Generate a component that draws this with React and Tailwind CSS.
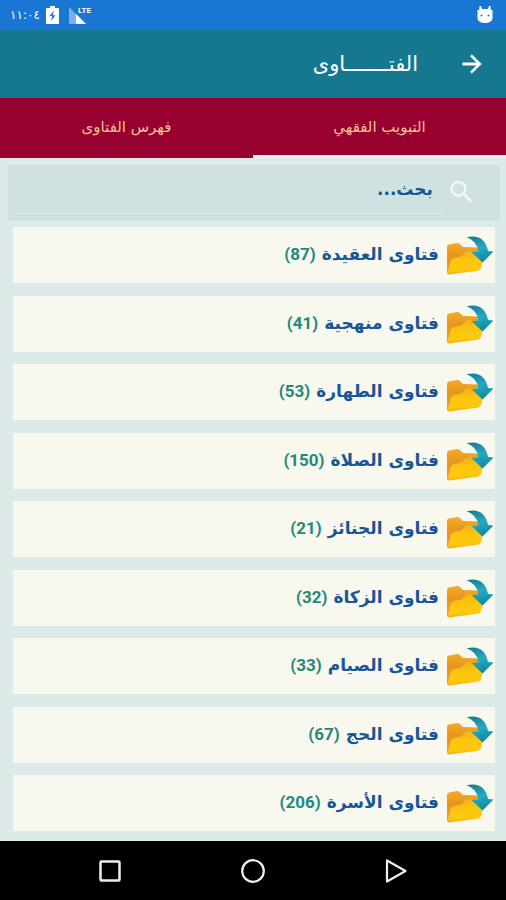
const categories = [
  { name: 'فتاوى العقيدة', count: 87 },
  { name: 'فتاوى منهجية', count: 41 },
  { name: 'فتاوى الطهارة', count: 53 },
  { name: 'فتاوى الصلاة', count: 150 },
  { name: 'فتاوى الجنائز', count: 21 },
  { name: 'فتاوى الزكاة', count: 32 },
  { name: 'فتاوى الصيام', count: 33 },
  { name: 'فتاوى الحج', count: 67 },
  { name: 'فتاوى الأسرة', count: 206 },
];

function FolderIcon() {
  return (
    <svg viewBox="0 0 48 44" className="h-11 w-12 shrink-0" aria-hidden="true">
      <defs>
        <linearGradient id="folder-back" x1="0" y1="0" x2="0" y2="1">
          <stop offset="0" stopColor="#f3ab2a" />
          <stop offset="0.4" stopColor="#e8961a" />
          <stop offset="1" stopColor="#e9a01f" />
        </linearGradient>
        <linearGradient id="folder-front" x1="0.5" y1="0" x2="0.6" y2="1">
          <stop offset="0" stopColor="#f6ae10" />
          <stop offset="0.4" stopColor="#fcc60c" />
          <stop offset="0.8" stopColor="#fdc90c" />
          <stop offset="1" stopColor="#ef9d13" />
        </linearGradient>
        <linearGradient id="folder-arrow" x1="0" y1="0" x2="0.3" y2="1">
          <stop offset="0" stopColor="#12788e" />
          <stop offset="0.55" stopColor="#22abc6" />
          <stop offset="1" stopColor="#128ba3" />
        </linearGradient>
      </defs>
      <path d="M1 14Q1 12 3 11.600L11 10Q13 9.700 14.500 11.500L17 14L34 14.500Q36 14.500 36 17V30L2 41Q1 41 1 39Z" fill="url(#folder-back)" />
      <path d="M5 28.500Q6 26 8 25.500L14 24.500Q17 23.500 19 20.500L21 18.500Q22 17.500 24 17.600L38 20Q39 20.500 38.500 22L35 35Q34.500 37 32.500 37.400L3 41.500Q1.500 41.500 2 39.500Z" fill="url(#folder-front)" />
      <path d="M2 39.500L5 28.500Q6 26 8 25.500L14 24.500Q17 23.500 19 20.500L21 18.500" fill="none" stroke="#f8c24a" strokeWidth="0.800" />
      <path d="M20.500 4.200Q38.500 0 42 18L47.500 18.500L36.500 29.500L25.500 19L32.500 18.500Q31 7.500 20.500 4.200Z" fill="url(#folder-arrow)" />
    </svg>
  );
}

function StatusBar() {
  return (
    <div dir="ltr" className="flex h-[30px] items-center bg-[#1976d2] px-[10px] text-white">
      <span className="w-9 font-['DejaVu_Sans',sans-serif] text-xs leading-none">١١:٠٤</span>
      <svg viewBox="0 0 13 18" className="h-[18px] w-[13px]" aria-hidden="true">
        <path d="M4 0H9V2H12Q13 2 13 3V17Q13 18 12 18H1Q0 18 0 17V3Q0 2 1 2H4Z" fill="white" />
        <path d="M8 4.500L3.500 10H6.200L5 15L9.500 9.200H6.800Z" fill="#1976d2" />
      </svg>
      <div className="relative ml-[10px] h-[18px] w-6">
        <svg viewBox="0 0 24 18" className="h-[18px] w-6" aria-hidden="true">
          <path d="M0 1L17 18H0Z" fill="#78afe6" />
          <path d="M7 8L17 18H7Z" fill="white" />
        </svg>
        <span className="absolute top-0 left-[9px] font-['Roboto',sans-serif] text-[8px] leading-[9px] font-bold">LTE</span>
      </div>
      <svg viewBox="0 0 16 18" className="mr-[3px] ml-auto h-[18px] w-4" aria-hidden="true">
        <path d="M2.500 0H4L5 3H11L12 0H13.500L13.800 4H15.500V13Q14 17 8 17Q2 17 .5 13V4H2.200Z" fill="white" />
        <circle cx="4.500" cy="9.500" r="1" fill="#1976d2" />
        <circle cx="11.500" cy="9.500" r="1" fill="#1976d2" />
      </svg>
    </div>
  );
}

export default function App() {
  return (
    <div dir="rtl" className="flex min-h-screen flex-col bg-[#dceaea] font-['DejaVu_Sans',sans-serif]">
      <StatusBar />
      <header className="flex h-[68px] items-center gap-10 bg-[#16788f] px-5 text-white">
        <button type="button" aria-label="رجوع" className="flex size-7 items-center justify-center">
          <svg viewBox="0 0 24 24" className="size-7" fill="currentColor" stroke="currentColor" strokeWidth="0.400" aria-hidden="true">
            <path d="M12 4l-1.410 1.410L16.170 11H4v2h12.170l-5.580 5.590L12 20l8-8z" />
          </svg>
        </button>
        <h1 className="text-[21px] leading-8">الفتـــــــاوى</h1>
      </header>
      <nav role="tablist" className="grid h-[60px] grid-cols-2 bg-[#980030] text-[15px] text-[#efc493]">
        <button type="button" role="tab" aria-selected="true" className="border-b-3 border-[#eef4f2] pt-px">
          التبويب الفقهي
        </button>
        <button type="button" role="tab" aria-selected="false" className="border-b-3 border-transparent pt-px">
          فهرس الفتاوى
        </button>
      </nav>
      <main className="flex flex-1 flex-col pt-[7px] pr-[6px] pb-[10px] pl-2">
        <label className="flex h-14 items-start bg-[#cfe2e1] pr-6">
          <svg viewBox="0 0 24 24" className="mt-3 size-[30px] shrink-0" fill="none" stroke="#f0f7f5" aria-hidden="true">
            <circle cx="10" cy="9.500" r="5.500" strokeWidth="2" />
            <path d="M14.300 13.800L20.200 19.700" strokeWidth="2.400" />
          </svg>
          <input
            type="search"
            aria-label="بحث"
            placeholder="بحث..."
            className="mr-1 ml-2 h-[49px] min-w-0 flex-1 border-b border-[#dcebe9] bg-transparent pr-[9px] text-[17px] font-bold text-[#1a5793] outline-none placeholder:text-[#1a5793]"
          />
        </label>
        <ul className="mt-[6px] flex flex-1 flex-col justify-between gap-3 px-[5px]">
          {categories.map((category) => (
            <li key={category.name}>
              <button type="button" className="flex h-14 w-full items-center bg-[#f8f8ef] pr-px">
                <FolderIcon />
                <span className="mr-[7px] text-[17px] font-bold text-[#1a5596]">{category.name}</span>
                <span dir="ltr" className="mr-[6px] font-['Roboto',sans-serif] text-[17px] font-bold text-[#24897a]">
                  ({category.count})
                </span>
              </button>
            </li>
          ))}
        </ul>
      </main>
      <nav dir="ltr" className="grid h-[59px] grid-cols-[1fr_64px_1fr] items-center bg-black px-[90px] text-[#eeeeee]">
        <button type="button" aria-label="التطبيقات الأخيرة" className="flex w-10 justify-center">
          <svg viewBox="0 0 24 24" className="size-6" fill="none" stroke="currentColor" strokeWidth="2.500" aria-hidden="true">
            <rect x="2.500" y="2.500" width="19" height="19" rx="1" />
          </svg>
        </button>
        <button type="button" aria-label="الرئيسية" className="flex justify-center">
          <svg viewBox="0 0 24 24" className="size-6" fill="none" stroke="currentColor" strokeWidth="2.200" aria-hidden="true">
            <circle cx="12" cy="12" r="10.800" />
          </svg>
        </button>
        <button type="button" aria-label="السابق" className="flex w-10 justify-center justify-self-end">
          <svg viewBox="0 0 24 24" className="size-6" fill="none" stroke="currentColor" strokeWidth="2.200" strokeLinejoin="round" aria-hidden="true">
            <path d="M3 1.500V22.500L21.500 12Z" />
          </svg>
        </button>
      </nav>
    </div>
  );
}
